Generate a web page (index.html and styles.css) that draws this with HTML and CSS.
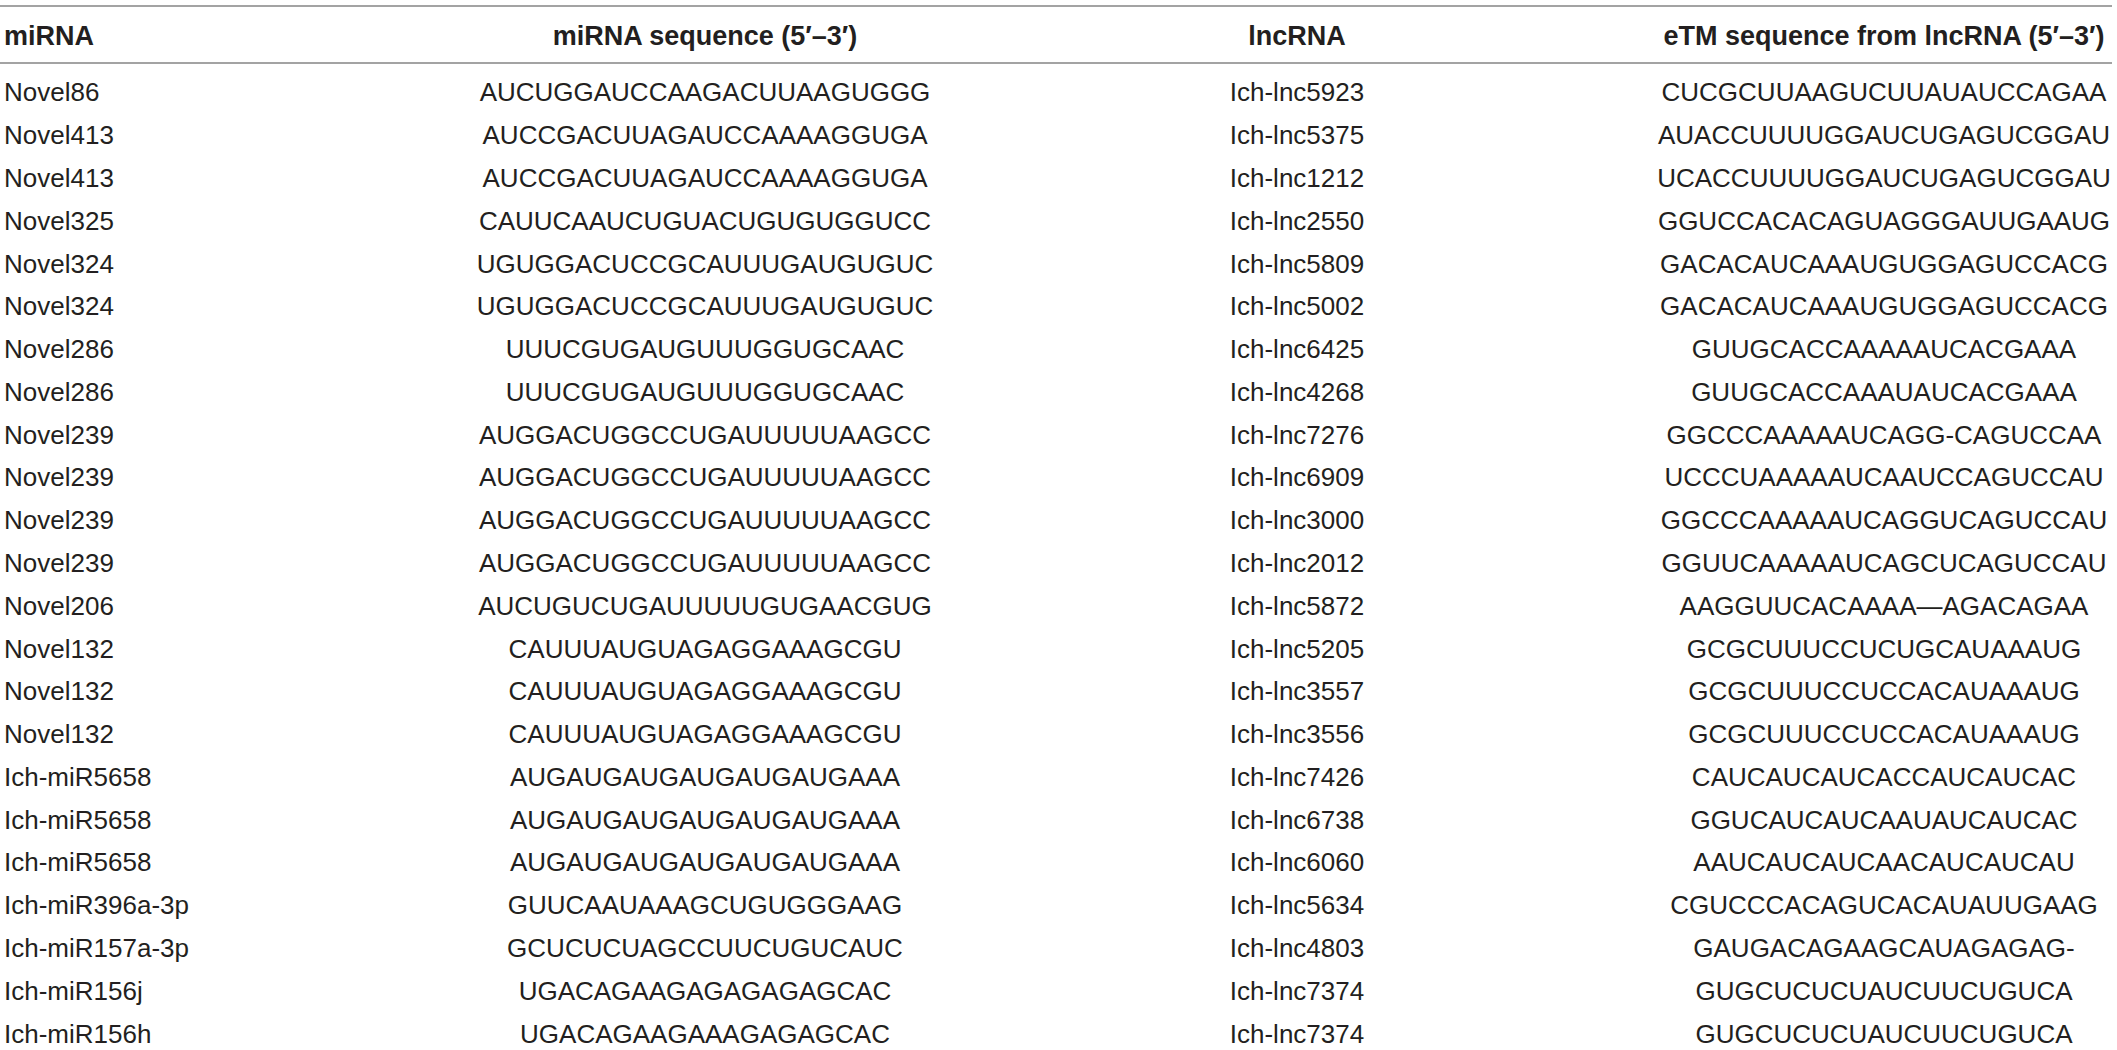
FILE: index.html
```html
<!DOCTYPE html>
<html lang="en">
<head>
    <meta charset="UTF-8">
    <meta name="viewport" content="width=device-width, initial-scale=1.0">
    <title>miRNA - lncRNA eTM pairs</title>
    <link rel="stylesheet" href="styles.css">
</head>
<body>
    <table class="etm-table">
        <colgroup>
            <col class="col-mirna">
            <col class="col-seq">
            <col class="col-lnc">
            <col class="col-etm">
        </colgroup>
        <thead>
            <tr>
                <th class="left">miRNA</th>
                <th>miRNA sequence (5′–3′)</th>
                <th class="lnc">lncRNA</th>
                <th>eTM sequence from lncRNA (5′–3′)</th>
            </tr>
        </thead>
        <tbody>
            <tr><td class="left">Novel86</td><td>AUCUGGAUCCAAGACUUAAGUGGG</td><td class="lnc">Ich-lnc5923</td><td>CUCGCUUAAGUCUUAUAUCCAGAA</td></tr>
            <tr><td class="left">Novel413</td><td>AUCCGACUUAGAUCCAAAAGGUGA</td><td class="lnc">Ich-lnc5375</td><td>AUACCUUUUGGAUCUGAGUCGGAU</td></tr>
            <tr><td class="left">Novel413</td><td>AUCCGACUUAGAUCCAAAAGGUGA</td><td class="lnc">Ich-lnc1212</td><td>UCACCUUUUGGAUCUGAGUCGGAU</td></tr>
            <tr><td class="left">Novel325</td><td>CAUUCAAUCUGUACUGUGUGGUCC</td><td class="lnc">Ich-lnc2550</td><td>GGUCCACACAGUAGGGAUUGAAUG</td></tr>
            <tr><td class="left">Novel324</td><td>UGUGGACUCCGCAUUUGAUGUGUC</td><td class="lnc">Ich-lnc5809</td><td>GACACAUCAAAUGUGGAGUCCACG</td></tr>
            <tr><td class="left">Novel324</td><td>UGUGGACUCCGCAUUUGAUGUGUC</td><td class="lnc">Ich-lnc5002</td><td>GACACAUCAAAUGUGGAGUCCACG</td></tr>
            <tr><td class="left">Novel286</td><td>UUUCGUGAUGUUUGGUGCAAC</td><td class="lnc">Ich-lnc6425</td><td>GUUGCACCAAAAAUCACGAAA</td></tr>
            <tr><td class="left">Novel286</td><td>UUUCGUGAUGUUUGGUGCAAC</td><td class="lnc">Ich-lnc4268</td><td>GUUGCACCAAAUAUCACGAAA</td></tr>
            <tr><td class="left">Novel239</td><td>AUGGACUGGCCUGAUUUUUAAGCC</td><td class="lnc">Ich-lnc7276</td><td>GGCCCAAAAAUCAGG-CAGUCCAA</td></tr>
            <tr><td class="left">Novel239</td><td>AUGGACUGGCCUGAUUUUUAAGCC</td><td class="lnc">Ich-lnc6909</td><td>UCCCUAAAAAUCAAUCCAGUCCAU</td></tr>
            <tr><td class="left">Novel239</td><td>AUGGACUGGCCUGAUUUUUAAGCC</td><td class="lnc">Ich-lnc3000</td><td>GGCCCAAAAAUCAGGUCAGUCCAU</td></tr>
            <tr><td class="left">Novel239</td><td>AUGGACUGGCCUGAUUUUUAAGCC</td><td class="lnc">Ich-lnc2012</td><td>GGUUCAAAAAUCAGCUCAGUCCAU</td></tr>
            <tr><td class="left">Novel206</td><td>AUCUGUCUGAUUUUUGUGAACGUG</td><td class="lnc">Ich-lnc5872</td><td>AAGGUUCACAAAA—AGACAGAA</td></tr>
            <tr><td class="left">Novel132</td><td>CAUUUAUGUAGAGGAAAGCGU</td><td class="lnc">Ich-lnc5205</td><td>GCGCUUUCCUCUGCAUAAAUG</td></tr>
            <tr><td class="left">Novel132</td><td>CAUUUAUGUAGAGGAAAGCGU</td><td class="lnc">Ich-lnc3557</td><td>GCGCUUUCCUCCACAUAAAUG</td></tr>
            <tr><td class="left">Novel132</td><td>CAUUUAUGUAGAGGAAAGCGU</td><td class="lnc">Ich-lnc3556</td><td>GCGCUUUCCUCCACAUAAAUG</td></tr>
            <tr><td class="left">Ich-miR5658</td><td>AUGAUGAUGAUGAUGAUGAAA</td><td class="lnc">Ich-lnc7426</td><td>CAUCAUCAUCACCAUCAUCAC</td></tr>
            <tr><td class="left">Ich-miR5658</td><td>AUGAUGAUGAUGAUGAUGAAA</td><td class="lnc">Ich-lnc6738</td><td>GGUCAUCAUCAAUAUCAUCAC</td></tr>
            <tr><td class="left">Ich-miR5658</td><td>AUGAUGAUGAUGAUGAUGAAA</td><td class="lnc">Ich-lnc6060</td><td>AAUCAUCAUCAACAUCAUCAU</td></tr>
            <tr><td class="left">Ich-miR396a-3p</td><td>GUUCAAUAAAGCUGUGGGAAG</td><td class="lnc">Ich-lnc5634</td><td>CGUCCCACAGUCACAUAUUGAAG</td></tr>
            <tr><td class="left">Ich-miR157a-3p</td><td>GCUCUCUAGCCUUCUGUCAUC</td><td class="lnc">Ich-lnc4803</td><td>GAUGACAGAAGCAUAGAGAG-</td></tr>
            <tr><td class="left">Ich-miR156j</td><td>UGACAGAAGAGAGAGAGCAC</td><td class="lnc">Ich-lnc7374</td><td>GUGCUCUCUAUCUUCUGUCA</td></tr>
            <tr><td class="left">Ich-miR156h</td><td>UGACAGAAGAAAGAGAGCAC</td><td class="lnc">Ich-lnc7374</td><td>GUGCUCUCUAUCUUCUGUCA</td></tr>
        </tbody>
    </table>
</body>
</html>
```

FILE: styles.css
```css
/* Global Styles */
* {
    margin: 0;
    padding: 0;
    box-sizing: border-box;
}

body {
    font-family: 'Liberation Sans', Arial, sans-serif;
    background-color: #fff;
    color: #231f20;
    padding-top: 5px;
}

/* Table */
.etm-table {
    width: 2112px;
    table-layout: fixed;
    border-collapse: collapse;
    border-top: 2px solid #a3a3a3;
}

.col-mirna { width: 400px; }
.col-seq { width: 610px; }
.col-lnc { width: 646px; }
.col-etm { width: 456px; }

.etm-table th,
.etm-table td {
    text-align: center;
    white-space: nowrap;
    line-height: 30px;
}

.etm-table th {
    font-size: 27px;
    font-weight: bold;
    padding: 14px 0 11px;
    border-bottom: 2px solid #a3a3a3;
}

.etm-table td {
    font-size: 26px;
    padding: 6.4px 0;
}

.etm-table tbody tr:first-child td {
    padding-top: 13.4px;
}

.etm-table .left {
    text-align: left;
    padding-left: 4px;
}

.etm-table .lnc {
    padding-right: 72px;
}
```
